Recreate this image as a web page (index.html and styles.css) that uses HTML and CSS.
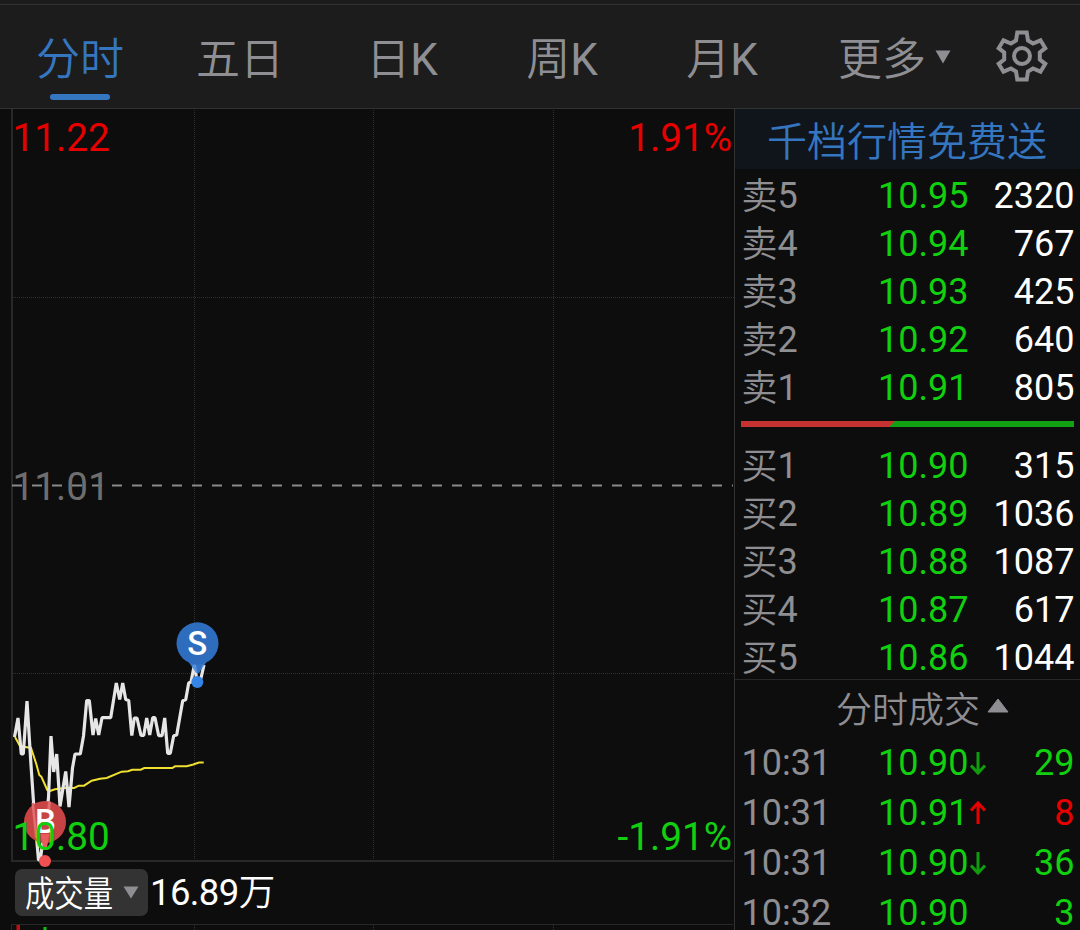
FILE: index.html
```
<!DOCTYPE html>
<html lang="zh-CN">
<head>
  <meta charset="UTF-8" />
  <meta name="viewport" content="width=device-width, initial-scale=1" />
  <title>分时</title>
  <link rel="stylesheet" href="styles.css">
</head>
<body>

  <nav class="tabs">
    <div class="tab active">分时</div>
    <div class="tab">五日</div>
    <div class="tab tab-k"><div><span class="zh">日</span>K</div></div>
    <div class="tab tab-k"><div><span class="zh">周</span>K</div></div>
    <div class="tab tab-k"><div><span class="zh">月</span>K</div></div>
    <div class="tab more">更多
      <svg width="16" height="14" viewBox="0 0 16 14"><path d="M0.5 0.5h15L8 13.5z" fill="#8e8e93"/></svg>
    </div>
    <div class="settings">
      <svg width="54" height="54" viewBox="-27 -27 54 54" fill="none" stroke="#8e8e93" stroke-width="4">
        <path d="M-4.7 -23.5H4.7L6 -15.5L11 -12.5L18.5 -15.7L23.3 -7.8L17.8 -3.5V3.5L23.3 7.8L18.5 15.7L11 12.5L6 15.5L4.7 23.5H-4.7L-6 15.5L-11 12.5L-18.5 15.7L-23.3 7.8L-17.8 3.5V-3.5L-23.3 -7.8L-18.5 -15.7L-11 -12.5L-6 -15.5Z"/>
        <circle r="8"/>
      </svg>
    </div>
  </nav>

  <main class="content">
    <section class="chart">
      <svg class="plot" width="734" height="753" viewBox="0 109 734 753">
        <!-- grid -->
        <g class="grid">
          <path d="M194.5 110V860M373.5 110V860M553.5 110V860M13 297.5H734M13 673.5H734"/>
        </g>
        <path class="frame" d="M12 109V861H733"/>
        <path class="base" d="M12 485.5H733"/>

        <!-- average and price -->
        <polyline class="avg" points="15,737 20,746 31,748 36.3,764 39.3,775 41.3,776.7 47.3,790 49,791.3 55,789.3 65.7,787.7 74.3,788 78.7,785.7 84,785.7 91.7,780.7 100,778.7 106.7,778 121.7,771.7 128,771.3 132.3,769.7 140.7,769.7 144.3,768 172.3,768 175,766.3 186.7,766.3 193.3,764.5 199,762.5 203.7,762.5"/>
        <polyline class="price" points="14.5,737 18,718 21.3,754 23.3,754 27,701 31,765 33.5,802 38.5,860 40.3,860 48.5,798 51,736 53.7,772 56.7,754 60,806.5 65.7,771.5 69,807 72.5,768 75,754 80.3,754 83.5,736 86.7,700.5 89.3,700.5 93,735 95.7,718.5 98.7,735 102,717.7 110.7,717.7 116.3,683 119.7,699.5 122.7,683 125.7,699.5 128.7,700.5 131.8,735.5 134.3,718 137,718 141,735.5 143.7,735.5 146.7,718 149.7,735 152.7,717.7 155,717.7 158.7,735.7 162,735.7 164.7,718 167.7,753.3 170.3,753.3 173.7,735.7 176.7,735 182.7,700.7 185.7,699.7 188.7,683 191,682 194.3,665 197.3,682 201,678 204,665"/>

        <!-- sell marker -->
        <path d="M188 661H207L199 673H196Z" fill="#3d86e0" opacity=".85"/>
        <circle cx="197.5" cy="643.3" r="21" fill="#2e6cbd"/>
        <text class="mark" x="197.3" y="654.5">S</text>
        <circle cx="197.3" cy="682" r="6" fill="#3585e8"/>

        <!-- buy marker -->
        <circle cx="45" cy="822" r="21" fill="#c84444"/>
        <path d="M31.5 803L34 803L37.5 838H35Z" fill="#e07070"/>
        <path d="M48 801.5H51L50 812H47Z" fill="#e07070"/>
        <text class="mark" x="45.3" y="833">B</text>
        <path d="M40.5 834H49.5L46.5 850H43.5Z" fill="#e85c5c"/>
        <circle cx="45" cy="861" r="6" fill="#f05050"/>

        <text class="label up" x="12.5" y="151">11.22</text>
        <text class="label up end" x="732" y="151">1.91%</text>
        <text class="label flat" x="12.5" y="500">11.01</text>
        <text class="label down" x="12.5" y="850">10.80</text>
        <text class="label down end" x="732" y="850">-1.91%</text>
      </svg>

      <div class="volume">
        <div class="pill">
          <span class="pill-text">成交量</span>
          <svg width="16" height="13" viewBox="0 0 16 13"><path d="M0.5 0.5h15L8 12.5z" fill="#8e8e93"/></svg>
        </div>
        <span class="amount">16.89<span class="zh">万</span></span>
      </div>

      <svg class="bars" width="734" height="6" viewBox="0 0 734 6">
        <path d="M11.5 6V0.5H733" fill="none" stroke="#282828"/>
        <path d="M194.5 1V6M373.5 1V6M553.5 1V6" fill="none" stroke="#303030" stroke-dasharray="1 1"/>
        <rect x="16.5" y="1" width="3.5" height="5" fill="#c01010"/>
        <rect x="43.5" y="3" width="3" height="3" fill="#10c010"/>
      </svg>
    </section>

    <aside class="side">
      <div class="promo">千档行情免费送</div>

      <div class="book">
        <div class="row"><span class="name"><span class="zh">卖</span>5</span><span class="price-cell">10.95</span><b>2320</b></div>
        <div class="row"><span class="name"><span class="zh">卖</span>4</span><span class="price-cell">10.94</span><b>767</b></div>
        <div class="row"><span class="name"><span class="zh">卖</span>3</span><span class="price-cell">10.93</span><b>425</b></div>
        <div class="row"><span class="name"><span class="zh">卖</span>2</span><span class="price-cell">10.92</span><b>640</b></div>
        <div class="row"><span class="name"><span class="zh">卖</span>1</span><span class="price-cell">10.91</span><b>805</b></div>
      </div>

      <div class="ratio"><div class="ratio-buy"></div></div>

      <div class="book buy">
        <div class="row"><span class="name"><span class="zh">买</span>1</span><span class="price-cell">10.90</span><b>315</b></div>
        <div class="row"><span class="name"><span class="zh">买</span>2</span><span class="price-cell">10.89</span><b>1036</b></div>
        <div class="row"><span class="name"><span class="zh">买</span>3</span><span class="price-cell">10.88</span><b>1087</b></div>
        <div class="row"><span class="name"><span class="zh">买</span>4</span><span class="price-cell">10.87</span><b>617</b></div>
        <div class="row"><span class="name"><span class="zh">买</span>5</span><span class="price-cell">10.86</span><b>1044</b></div>
      </div>

      <div class="deals-title">分时成交
        <svg width="22" height="15" viewBox="0 0 22 15"><path d="M1 14L11 1L21 14z" fill="#8e8e93" stroke="#8e8e93" stroke-linejoin="round"/></svg>
      </div>

      <div class="deals">
        <div class="row"><span class="name">10:31</span><span class="price-cell">10.90<svg class="arrow" width="16" height="24" viewBox="0 0 16 24"><path d="M8 1V22M1 14.5L8 22L15 14.5" stroke="#0f9d0f"/></svg></span><b class="down">29</b></div>
        <div class="row"><span class="name">10:31</span><span class="price-cell">10.91<svg class="arrow" width="16" height="24" viewBox="0 0 16 24"><path d="M8 23V2M1 9.5L8 2L15 9.5" stroke="#e60000"/></svg></span><b class="up">8</b></div>
        <div class="row"><span class="name">10:31</span><span class="price-cell">10.90<svg class="arrow" width="16" height="24" viewBox="0 0 16 24"><path d="M8 1V22M1 14.5L8 22L15 14.5" stroke="#0f9d0f"/></svg></span><b class="down">36</b></div>
        <div class="row"><span class="name">10:32</span><span class="price-cell">10.90</span><b class="down">3</b></div>
      </div>
    </aside>
  </main>

</body>
</html>
```
FILE: styles.css
```
* {
  box-sizing: border-box;
}
body {
  margin: 0;
  width: 1080px;
  height: 930px;
  overflow: hidden;
  background: #0d0d0d;
  color: #8e8e93;
  font-family: Roboto, "Noto Sans CJK SC", sans-serif;
}
svg {
  display: block;
  flex: none;
}
.zh {
  font-weight: 350;
}
.tabs {
  display: flex;
  height: 109px;
  padding-top: 4px;
  background: linear-gradient(#323232, #323232) 0 4px / 100% 1px no-repeat #1c1c1c;
  border-bottom: 1px solid #323232;
}
.tab {
  display: flex;
  flex-direction: column;
  align-items: center;
  width: 160px;
  font-size: 44px;
  font-weight: 350;
  line-height: 64px;
  padding-top: 24px;
}
.tab-k {
  padding-left: 4px;
  font-weight: 400;
}
.tab.active {
  color: #3576c0;
}
.tab.active::after {
  content: "";
  width: 60px;
  height: 6px;
  margin-top: 2px;
  border-radius: 3px;
  background: #3576c0;
}
.tab.more {
  flex-direction: row;
  align-items: flex-start;
  padding-left: 38px;
  gap: 9px;
}
.tab.more svg {
  margin-top: 22px;
}
.settings {
  padding: 25px 0 0 35px;
}

.content {
  display: flex;
  height: 821px;
}
.chart {
  width: 734px;
}
.plot {
  overflow: visible;
}
.grid {
  fill: none;
  stroke: #303030;
  stroke-dasharray: 1 1;
}
.frame {
  fill: none;
  stroke: #282828;
  stroke-width: 2;
}
.base {
  stroke: #8a8a8a;
  stroke-width: 2;
  stroke-dasharray: 10 10;
}
.avg {
  fill: none;
  stroke: #f0e030;
  stroke-width: 2;
}
.price {
  fill: none;
  stroke: #e6e6e6;
  stroke-width: 3.2;
  stroke-linejoin: bevel;
}
.mark {
  fill: #fff;
  font-size: 33px;
  font-weight: 500;
  text-anchor: middle;
}
.label {
  font-size: 38.7px;
}
.end {
  text-anchor: end;
}
.up {
  fill: #e60000;
  color: #e60000;
}
.down {
  fill: #10d010;
  color: #10d010;
}
.flat {
  fill: #6e6e6e;
}
.volume {
  display: flex;
  align-items: flex-start;
  height: 62px;
  padding: 7px 0 0 15px;
}
.pill {
  display: flex;
  align-items: center;
  width: 133px;
  height: 47px;
  padding-left: 10px;
  border-radius: 7px;
  background: #333;
  color: #fff;
  font-size: 36px;
}
.pill-text {
  width: 98px;
  margin-top: -3px;
  font-weight: 350;
  white-space: nowrap;
  transform: scaleX(.815);
  transform-origin: left;
}
.amount {
  margin-left: 2px;
  color: #fff;
  font-size: 36.5px;
  line-height: 47px;
  letter-spacing: -.6px;
}

.side {
  width: 346px;
  border-left: 1px solid #323232;
}
.promo {
  height: 60px;
  padding-right: 1px;
  background: #10151c;
  color: #3576c0;
  font-size: 40px;
  font-weight: 350;
  line-height: 68px;
  text-align: center;
}
.row {
  display: flex;
  height: 48px;
  padding: 0 5.5px 0 6.5px;
  font-size: 36px;
  line-height: 48px;
  white-space: nowrap;
}
.row .name {
  width: 136.5px;
}
.row .zh {
  display: inline-block;
  line-height: 1;
  transform: translateY(1px);
}
.row b {
  margin-left: auto;
  color: #fff;
  font-weight: 400;
}
.row b.up {
  color: #e60000;
}
.row b.down {
  color: #10d010;
}
.book {
  padding-top: 3px;
}
.buy {
  height: 240px;
}
.price-cell {
  display: flex;
  align-items: center;
  color: #10d010;
}
.ratio {
  height: 6px;
  margin: 9px 6px 12px 6px;
  background: #14a014;
}
.ratio-buy {
  width: 154px;
  height: 6px;
  background: #c63232;
  clip-path: polygon(0 0, 100% 0, 148px 100%, 0 100%);
}
.deals-title {
  display: flex;
  align-items: flex-start;
  justify-content: center;
  gap: 7px;
  height: 59px;
  padding-left: 30px;
  border-top: 1px solid #282828;
  font-size: 36px;
  font-weight: 350;
  line-height: 62px;
}
.deals-title svg {
  margin-top: 18px;
}
.deals .row {
  height: 50px;
  line-height: 50px;
}
.arrow {
  margin-left: 2px;
  fill: none;
  stroke-width: 3;
}
```
